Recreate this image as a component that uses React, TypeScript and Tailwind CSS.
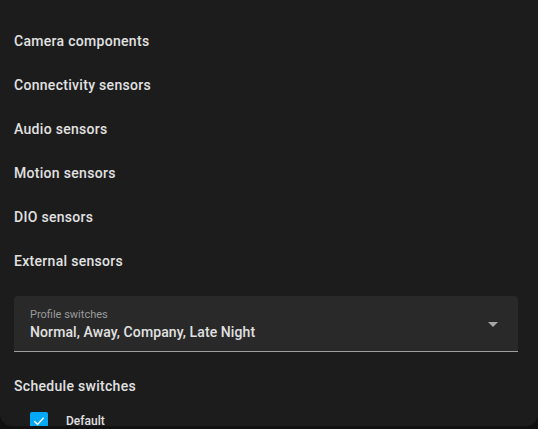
import React from 'react';

const items = [
  'Camera components',
  'Connectivity sensors',
  'Audio sensors',
  'Motion sensors',
  'DIO sensors',
  'External sensors',
];

export default function App() {
  return (
    <div className="w-[538px] h-[429px] bg-[#111111] overflow-hidden" style={{ fontFamily: 'Roboto, "Liberation Sans", sans-serif' }}>
      <div className="h-[426px] bg-[#1c1c1c] rounded-b-[12px] overflow-hidden pt-[19px]">
        {/* Sections */}
        {items.map((label) => (
          <div key={label} className="h-[44px] flex items-center px-[14px] text-[14px] font-medium text-[#e1e1e1] tracking-[0.3px]">
            {label}
          </div>
        ))}

        {/* Profile select */}
        <div className="ml-[14px] mr-[20px] mt-[13px] h-[56px] bg-[#292929] rounded-t-[4px] border-b border-[#9e9e9e] flex items-center pl-[16px] pr-[20px]">
          <div className="flex-1 flex flex-col pt-[2px]">
            <span className="text-[11px] leading-[14px] text-[#9b9b9b]">Profile switches</span>
            <span className="text-[14px] leading-[20px] font-medium text-[#e1e1e1] tracking-[0.1px]">Normal, Away, Company, Late Night</span>
          </div>
          <svg width="10" height="5" viewBox="0 0 10 5" className="mt-[1px]">
            <path d="M0 0 L10 0 L5 5 Z" fill="#a6a6a6" />
          </svg>
        </div>

        {/* Schedule switches */}
        <div className="h-[44px] mt-[12px] flex items-center px-[14px] text-[14px] font-medium text-[#e1e1e1] tracking-[0.3px]">
          Schedule switches
        </div>
        <div className="flex items-center pl-[30px] mt-[4px] gap-[18px]">
          <div className="w-[18px] h-[18px] shrink-0 rounded-[2px] bg-[#03a9f4] flex items-center justify-center">
            <svg width="14" height="14" viewBox="0 0 24 24">
              <path d="M4 12.5 L9.5 18 L20 6.5" fill="none" stroke="#ffffff" strokeWidth="2.6" />
            </svg>
          </div>
          <span className="text-[12px] font-medium text-[#e1e1e1]">Default</span>
        </div>
      </div>
    </div>
  );
}
